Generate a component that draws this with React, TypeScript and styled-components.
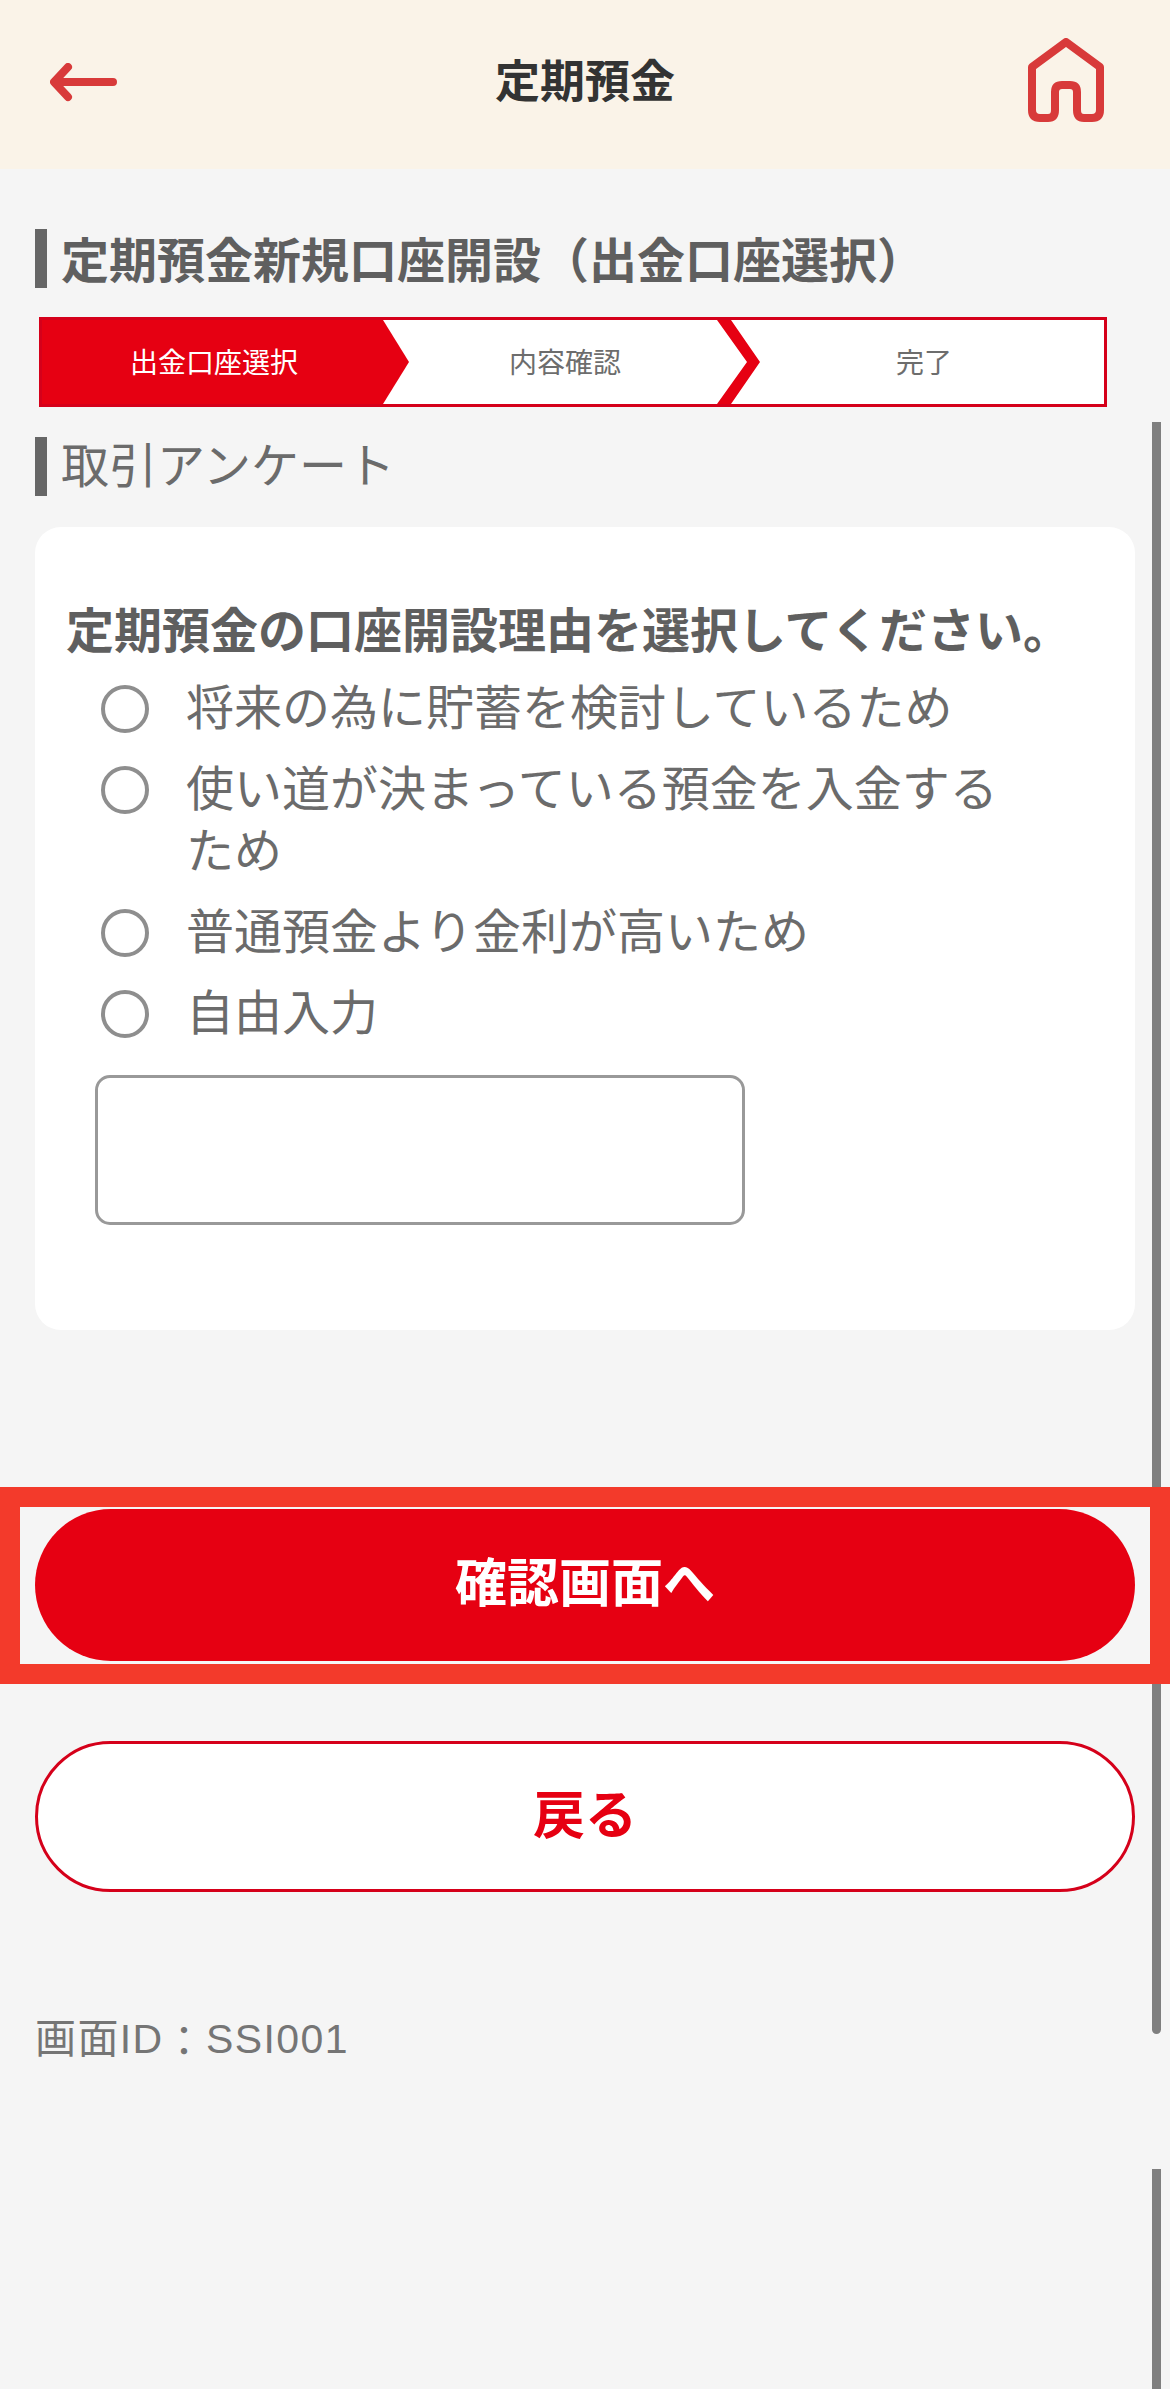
import styled, { createGlobalStyle } from "styled-components";

const red = "#e60012";
const cjk = `"Noto Sans CJK JP", "Noto Sans", sans-serif`;

const GlobalStyle = createGlobalStyle`
  html, body {
    margin: 0;
    padding: 0;
    background: #f5f5f5;
  }
  * {
    box-sizing: border-box;
  }
`;

const Page = styled.div`
  position: relative;
  width: 1170px;
  height: 2389px;
  overflow: hidden;
  background: #f5f5f5;
  font-family: ${cjk};
`;

const Thumb = styled.div<{ $top: number; $height: number; $rounded?: boolean }>`
  position: absolute;
  top: ${(p) => p.$top}px;
  left: 1152px;
  width: 9px;
  height: ${(p) => p.$height}px;
  background: #7f7f7f;
  border-radius: ${(p) => (p.$rounded ? "0 0 5px 5px" : "0")};
`;

const Header = styled.header`
  display: grid;
  grid-template-columns: 1fr auto 1fr;
  align-items: center;
  height: 169px;
  padding: 0 50px;
  background: #faf3e8;
`;

const HeaderTitle = styled.h1`
  margin: 0 0 12px;
  font-size: 45px;
  font-weight: 700;
  line-height: 60px;
  color: #333;
`;

const BackIcon = styled.svg`
  display: block;
  width: 68px;
  height: 40px;
  margin-bottom: 4px;
`;

const HomeIcon = styled.svg`
  display: block;
  justify-self: end;
  width: 76px;
  height: 84px;
  margin: 0 16px 9px 0;
`;

const Main = styled.main`
  padding: 0 35px;
`;

const Heading = styled.h2<{ $bold?: boolean }>`
  display: flex;
  align-items: center;
  height: 59px;
  margin: 0;
  padding: 0 0 ${(p) => (p.$bold ? 3 : 8)}px 14px;
  border-left: 12px solid #666;
  font-size: 48px;
  font-weight: ${(p) => (p.$bold ? 700 : 400)};
  line-height: 59px;
  color: ${(p) => (p.$bold ? "#5f5f5f" : "#6b6b6b")};
`;

const PageHeading = styled(Heading)`
  margin-top: 60px;
`;

const SectionHeading = styled(Heading)`
  margin-top: 30px;
`;

const Stepper = styled.ol`
  display: flex;
  height: 90px;
  margin: 29px 28px 0 4px;
  padding: 0;
  list-style: none;
  border: 3px solid #d5001a;
  background: #fff;
`;

const Step = styled.li<{ $state: "active" | "next" | "last" }>`
  position: relative;
  display: flex;
  align-items: center;
  justify-content: center;
  width: ${(p) => (p.$state === "active" ? 341 : p.$state === "next" ? 361 : 360)}px;
  padding: 0 0 2px ${(p) => (p.$state === "last" ? 0 : 3)}px;
  font-size: 28px;
  color: ${(p) => (p.$state === "active" ? "#fff" : "#6d6d6d")};
  background: ${(p) => (p.$state === "active" ? red : "transparent")};

  &::after {
    content: "";
    position: absolute;
    top: 0;
    bottom: 0;
    display: ${(p) => (p.$state === "last" ? "none" : "block")};
    left: ${(p) => (p.$state === "active" ? "100%" : "calc(100% - 27px)")};
    width: ${(p) => (p.$state === "active" ? 26 : 43)}px;
    background: ${red};
    clip-path: ${(p) =>
      p.$state === "active"
        ? "polygon(0 0, 100% 50%, 0 100%)"
        : "polygon(0 0, 14px 0, 43px 50%, 14px 100%, 0 100%, 30px 50%)"};
  }
`;

const Card = styled.section`
  height: 803px;
  margin-top: 31px;
  padding: 68px 31px 0;
  border-radius: 26px;
  background: #fff;
`;

const Question = styled.p`
  margin: 0;
  font-size: 48px;
  font-weight: 700;
  line-height: 64px;
  white-space: nowrap;
  color: #5f5f5f;
`;

const Options = styled.div`
  display: flex;
  flex-direction: column;
  gap: 19px;
  margin: 14px 0 0 35px;
`;

const Option = styled.label`
  display: flex;
  align-items: flex-start;
  gap: 37px;
  width: 916px;
  font-size: 48px;
  line-height: 62px;
  color: #6b6b6b;
`;

const Radio = styled.input`
  flex: none;
  width: 48px;
  height: 48px;
  margin: 12px 0 0;
  border: 4px solid #8e8e8e;
  border-radius: 50%;
  background: #fff;
  appearance: none;
`;

const FreeText = styled.input`
  display: block;
  width: 650px;
  height: 150px;
  margin: 35px 0 0 29px;
  border: 3px solid #999;
  border-radius: 15px;
  background: #fff;
`;

const Highlight = styled.div`
  position: relative;
  z-index: 2;
  height: 197px;
  margin: 157px -35px 0;
  padding: 2px 15px;
  border: 20px solid #f33a2b;
`;

const Button = styled.button<{ $primary?: boolean }>`
  display: block;
  width: 100%;
  height: ${(p) => (p.$primary ? 152 : 151)}px;
  padding: 0 0 ${(p) => (p.$primary ? 12 : 10)}px;
  border: ${(p) => (p.$primary ? "none" : "3px solid #d5001a")};
  border-radius: 76px;
  font-family: ${cjk};
  font-size: 52px;
  font-weight: 700;
  color: ${(p) => (p.$primary ? "#fff" : red)};
  background: ${(p) => (p.$primary ? red : "#fff")};
`;

const BackButton = styled(Button)`
  margin-top: 57px;
`;

const ScreenId = styled.p`
  height: 60px;
  margin: 117px 0 0;
  font-family: "Liberation Sans", ${cjk};
  font-size: 41px;
  letter-spacing: 1.4px;
  line-height: 60px;
  color: #757575;
`;

const Colon = styled.span`
  vertical-align: -3px;
`;

function App() {
  return (
    <Page>
      <GlobalStyle />
      <Thumb $top={422} $height={1612} $rounded />
      <Thumb $top={2169} $height={220} />
      <Header>
        <BackIcon viewBox="0 0 68 40" fill="none" stroke="#d83a3a" strokeWidth="8" strokeLinecap="round" strokeLinejoin="round">
          <path d="M18 4 L4 19 L18 34 M6 19 H63" />
        </BackIcon>
        <HeaderTitle>定期預金</HeaderTitle>
        <HomeIcon viewBox="0 0 76 84" fill="none" stroke="#d83a3a" strokeWidth="8" strokeLinejoin="round">
          <path d="M38 4 L72 29 V72 Q72 80 64 80 H56 Q49 80 49 72 V54 Q49 47 42 47 H34 Q27 47 27 54 V72 Q27 80 20 80 H12 Q4 80 4 72 V29 Z" />
        </HomeIcon>
      </Header>
      <Main>
        <PageHeading $bold>定期預金新規口座開設（出金口座選択）</PageHeading>
        <Stepper>
          <Step $state="active">出金口座選択</Step>
          <Step $state="next">内容確認</Step>
          <Step $state="last">完了</Step>
        </Stepper>
        <SectionHeading>取引アンケート</SectionHeading>
        <Card>
          <Question>定期預金の口座開設理由を選択してください。</Question>
          <Options>
            <Option>
              <Radio type="radio" name="reason" />
              <span>将来の為に貯蓄を検討しているため</span>
            </Option>
            <Option>
              <Radio type="radio" name="reason" />
              <span>使い道が決まっている預金を入金するため</span>
            </Option>
            <Option>
              <Radio type="radio" name="reason" />
              <span>普通預金より金利が高いため</span>
            </Option>
            <Option>
              <Radio type="radio" name="reason" />
              <span>自由入力</span>
            </Option>
          </Options>
          <FreeText type="text" />
        </Card>
        <Highlight>
          <Button $primary>確認画面へ</Button>
        </Highlight>
        <BackButton>戻る</BackButton>
        <ScreenId>
          画面ID<Colon>：</Colon>SSI001
        </ScreenId>
      </Main>
    </Page>
  );
}

export default App;
